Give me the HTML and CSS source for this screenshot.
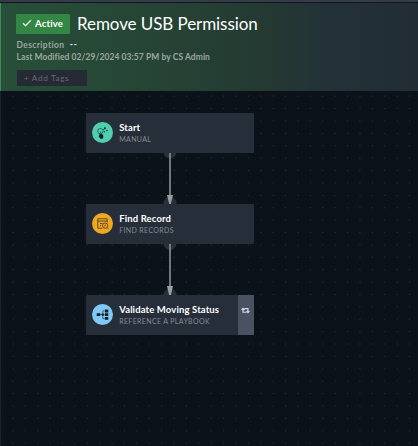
FILE: index.html
```html
<!DOCTYPE html>
<html lang="en">
<head>
<meta charset="utf-8">
<title>Remove USB Permission</title>
<link rel="stylesheet" href="styles.css">
</head>
<body>
<header class="header">
  <div class="title-row">
    <span class="status"><svg class="check" viewBox="0 0 10 8"><path d="M1 4.2 3.6 6.600 9 1.200"/></svg>Active</span>
    <h1 class="title">Remove USB Permission</h1>
  </div>
  <div class="description">Description <span class="empty">--</span></div>
  <div class="modified">Last Modified 02/29/2024 03:57 PM by CS Admin</div>
  <div class="tags">+ Add Tags</div>
</header>
<main class="canvas">
  <svg class="links" viewBox="0 0 418 355">
    <g class="ports"><circle cx="170" cy="61" r="6.5"/><circle cx="170" cy="112" r="6.5"/><circle cx="170" cy="152.500" r="6.5"/><circle cx="170" cy="204" r="6.5"/></g>
    <path class="line" d="M170 62V108M170 153V200"/>
    <path class="head" d="M167 104H173L170.800 113H169.200ZM167 195H173L170.800 204.500H169.200Z"/>
  </svg>
  <section class="node start">
    <span class="icon teal"><svg viewBox="0 0 20 20">
      <circle class="stroke thin" cx="8" cy="8.700" r="2.600"/>
      <path class="stroke thin" d="M10.500 7.500 12.300 6.300M8.300 9V13"/>
      <circle cx="12.300" cy="6" r=".9"/><circle cx="14.300" cy="8" r=".7"/><circle cx="12" cy="9.300" r=".6"/>
      <path d="M7.200 11.500H9.200L10.700 12.500V14.500L10 16H8L6.500 13.800Z"/>
    </svg></span>
    <div class="text"><div class="name">Start</div><div class="kind">MANUAL</div></div>
  </section>
  <section class="node find">
    <span class="icon orange"><svg viewBox="0 0 20 20">
      <path class="stroke" d="M10 14.500H5.500V5.500H14.500V9M5.500 7.700H14.500M7.500 10H10M7.500 12H9"/>
      <circle class="stroke" cx="12.500" cy="12" r="2.500"/><path class="stroke" d="M14.300 13.800 15.800 15.200M11.500 12.500 13.300 11.300"/>
    </svg></span>
    <div class="text"><div class="name">Find Record</div><div class="kind">FIND RECORDS</div></div>
  </section>
  <section class="node validate">
    <span class="icon blue"><svg viewBox="0 0 20 20">
      <path class="stroke thin" d="M7 10H12M10.300 6.500V14M10.300 6.500H12M10.300 14H12"/>
      <path d="M4.500 8.700H7.800V11.500H4.500ZM9.300 9H11.200V11.200H9.300ZM12.300 5.200H15.500V8H12.300ZM12.300 8.800H15.500V11.500H12.300ZM12.300 12.300H15.500V15.100H12.300Z"/>
    </svg></span>
    <div class="text"><div class="name">Validate Moving Status</div><div class="kind">REFERENCE A PLAYBOOK</div></div>
    <span class="repeat"><svg viewBox="0 0 10 8"><path d="M2.200 2V6H6.200M3.800 1.800H7.800V6M.6 3.400 2.200 1.600 3.800 3.400M6.200 4.600 7.800 6.400 9.400 4.600"/></svg></span>
  </section>
</main>
</body>
</html>
```
FILE: styles.css
```css
* { box-sizing: border-box; }
body {
  margin: 0;
  width: 418px;
  height: 446px;
  overflow: hidden;
  background: #0b121a;
  color: #fff;
  font-family: Lato, sans-serif;
}
.header {
  height: 91px;
  padding: 10px 16px 0;
  border-top: 2px solid #373b49;
  background:
    linear-gradient(#0e1820, #0e1820) 0 0 / 100% 1px no-repeat,
    linear-gradient(#3f8a50, #3f8a50) 0 1px / 1px 100% no-repeat,
    linear-gradient(90deg, #284f39 0%, #264535 35%, #243832 66%, #223238 78%, #222c34 100%);
}
.title-row { display: flex; gap: 7px; height: 22px; }
.status {
  display: flex;
  align-items: center;
  width: 54px;
  height: 20px;
  margin-top: 2px;
  padding: 0 0 2px 6px;
  border-radius: 1px;
  background: #348645;
  font-size: 9.500px;
  font-weight: 700;
  letter-spacing: .2px;
  white-space: nowrap;
}
.check {
  flex: none;
  width: 10px;
  height: 8px;
  margin-right: 3px;
  fill: none;
  stroke: #fff;
  stroke-width: 1.2;
}
.title {
  margin: 0;
  font-size: 17px;
  font-weight: 400;
  line-height: 23px;
  letter-spacing: -.08px;
  white-space: nowrap;
}
.description, .modified {
  margin-left: .6px;
  font-size: 8.500px;
  font-weight: 700;
  line-height: 12px;
  letter-spacing: .06px;
  color: #9aa8a0;
  white-space: nowrap;
}
.description { margin-top: 5px; letter-spacing: .36px; }
.empty {
  position: relative;
  top: -1px;
  margin-left: 3px;
  color: #e2e7e4;
  font-weight: 900;
  letter-spacing: .8px;
}
.tags {
  width: 70px;
  height: 16px;
  margin: 7px 0 0 1px;
  padding-left: 7px;
  background: #252a35;
  color: #666c76;
  font-size: 8.200px;
  line-height: 16px;
  letter-spacing: .65px;
}
.canvas {
  position: relative;
  height: 355px;
  border-left: 1px solid #18232a;
  background: radial-gradient(circle at 50% 50%, #29323a 0 .5px, transparent 1px) 5.800px -1px / 12.400px 12.400px;
}
.links { position: absolute; left: -1px; top: 0; width: 418px; height: 355px; }
.ports { fill: #293039; }
.line { stroke: #8c9195; stroke-width: 1.6; }
.head { fill: #9a9ea1; }
.node {
  position: absolute;
  left: 84.600px;
  display: flex;
  align-items: center;
  width: 168.400px;
  height: 40px;
  padding-left: 6.400px;
  border-radius: 1px;
  background: #252e39;
}
.start { top: 22px; }
.find { top: 113px; }
.validate { top: 204px; }
.icon { flex: none; width: 21px; height: 21px; margin-top: -2px; border-radius: 50%; }
.icon svg { display: block; width: 21px; height: 21px; fill: #102027; }
.icon .stroke { fill: none; stroke: #4a3a22; stroke-width: .8; }
.icon .thin { stroke: #1d4850; stroke-width: .7; }
.teal { background: #4fcfae; }
.orange { background: #f0a823; }
.blue { background: #80c8f5; }
.text { flex: 1; padding-left: 6.200px; white-space: nowrap; }
.name { font-size: 9.500px; font-weight: 700; line-height: 12px; letter-spacing: .13px; }
.kind { font-size: 7px; line-height: 10px; color: #858b91; letter-spacing: .36px; }
.repeat {
  display: flex;
  align-items: center;
  justify-content: center;
  width: 16px;
  height: 40px;
  padding-bottom: 10px;
  background: #4a5261;
}
.repeat svg { width: 9px; height: 7px; fill: none; stroke: #d4dce8; stroke-width: 1.3; }
```
